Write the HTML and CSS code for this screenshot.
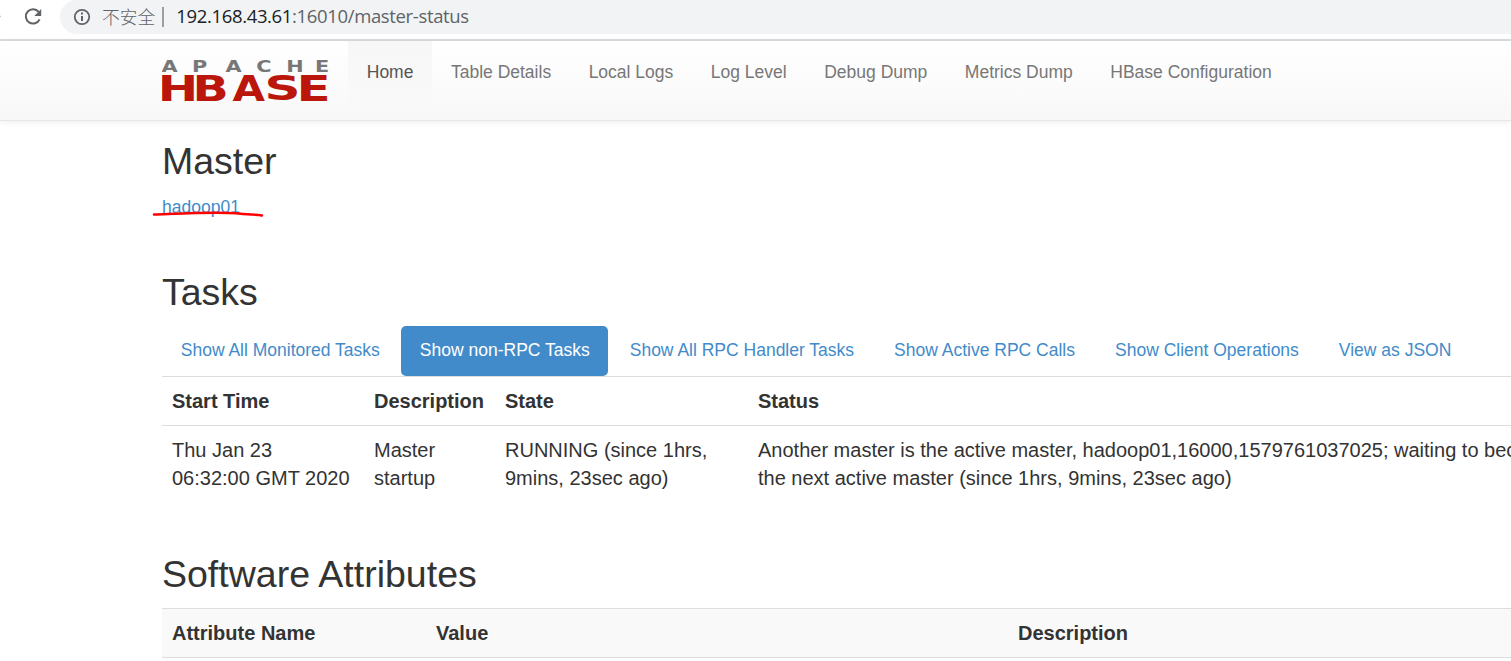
FILE: index.html
```html
<!DOCTYPE html>
<html lang="en">
<head>
<meta charset="utf-8">
<title>Master: hadoop01</title>
<link rel="stylesheet" href="styles.css">
</head>
<body>
<div class="browser-bar">
  <svg class="reload" width="60" height="34" viewBox="0 0 60 34">
    <circle cx="0" cy="16.500" r="1" fill="#c4c6c9"/>
    <path d="M38.700 11.900A7.200 7.200 0 1 0 39.600 19.300" fill="none" stroke="#5f6368" stroke-width="2"/>
    <path d="M41.200 9v6.900h-6.900z" fill="#5f6368"/>
  </svg>
  <div class="address">
    <svg class="info" width="18" height="18" viewBox="0 0 18 18">
      <circle cx="9" cy="9" r="7.200" fill="none" stroke="#5f6368" stroke-width="1.800"/>
      <path d="M9 4.500v2M9 8v5" stroke="#5f6368" stroke-width="2"/>
    </svg>
    <span class="insecure">不安全</span>
    <span class="divider"></span>
    <span class="url"><b>192.168.43.61</b>:16010/master-status</span>
  </div>
</div>
<header class="navbar">
  <a class="brand">
    <svg width="168" height="44" viewBox="0 0 168 44">
      <g class="apache" transform="translate(0 12.800) scale(1.300 1)">
        <text x="-0.300 23 48.800 72.600 95.500 117.700">APACHE</text>
      </g>
      <g class="hbase">
        <text transform="translate(-4.300 41.500) scale(1.380 1)">H</text>
        <text transform="translate(30.500 41.500) scale(1.360 1)">B</text>
        <text transform="translate(70.500 41.500) scale(1.200 1)">A</text>
        <text transform="translate(102.500 41.200) scale(1.430 .960)">S</text>
        <text transform="translate(134.500 41.500) scale(1.430 1)">E</text>
      </g>
    </svg>
  </a>
  <nav class="menu">
    <a class="active">Home</a><a>Table Details</a><a>Local Logs</a><a>Log Level</a><a>Debug Dump</a><a>Metrics Dump</a><a>HBase Configuration</a>
  </nav>
</header>
<main class="container">
  <section class="master">
    <h2>Master</h2>
    <a class="host">hadoop01
      <svg class="underline" width="114" height="8" viewBox="0 0 114 8"><path d="M2 4.500C25 3.700 66 1.500 84 3.300C96 5 104 4.200 110 5.500" fill="none" stroke="#f00" stroke-width="2.500" stroke-linecap="round"/></svg>
    </a>
  </section>
  <section class="tasks">
    <h2>Tasks</h2>
    <nav class="pills">
      <a>Show All Monitored Tasks</a><a class="active">Show non-RPC Tasks</a><a>Show All RPC Handler Tasks</a><a>Show Active RPC Calls</a><a>Show Client Operations</a><a>View as JSON</a>
    </nav>
    <table class="task-table">
      <colgroup><col class="start"><col class="desc"><col class="state"><col></colgroup>
      <tr><th>Start Time</th><th>Description</th><th>State</th><th>Status</th></tr>
      <tr><td>Thu Jan 23<br>06:32:00 GMT 2020</td><td>Master<br>startup</td><td>RUNNING (since 1hrs,<br>9mins, 23sec ago)</td><td>Another master is the active master, hadoop01,16000,1579761037025; waiting to become<br>the next active master (since 1hrs, 9mins, 23sec ago)</td></tr>
    </table>
  </section>
  <section class="software">
    <h2>Software Attributes</h2>
    <table class="attributes">
      <colgroup><col class="name"><col class="value"><col></colgroup>
      <tr><th>Attribute Name</th><th>Value</th><th>Description</th></tr>
      <tr><td></td><td></td><td></td></tr>
    </table>
  </section>
</main>
</body>
</html>
```
FILE: styles.css
```css
* { box-sizing: border-box; }
html { overflow: hidden; }
body {
  margin: 0;
  height: 661px;
  overflow: hidden;
  background: #fff;
  color: #333;
  font: 17.5px/25px "Liberation Sans", Arial, sans-serif;
}
.browser-bar {
  display: flex;
  height: 41px;
  border-bottom: 2px solid #dadce0;
}
.reload { flex: none; }
.address {
  display: flex;
  align-items: center;
  flex: 1;
  height: 34px;
  padding-left: 13px;
  border-radius: 17px 0 0 17px;
  background: #f1f3f4;
  color: #5f6368;
}
.info { flex: none; }
.insecure {
  margin-left: 11px;
  padding-bottom: 2px;
  font: 300 17.75px/32px "Noto Sans CJK SC", sans-serif;
}
.divider {
  width: 2px;
  height: 20px;
  margin: 0 12px 0 7px;
  background: #9b9fa3;
}
.url {
  padding-bottom: 2px;
  font: 18.5px/32px "Open Sans", sans-serif;
  letter-spacing: -0.35px;
  white-space: nowrap;
}
.url b { font-weight: 400; color: #202124; }
.navbar {
  display: flex;
  height: 80px;
  padding-left: 162px;
  border-bottom: 1px solid #e7e7e7;
  background: linear-gradient(#fff, #f8f8f8);
  box-shadow: 0 1px 6px rgba(0, 0, 0, .075);
}
.brand { padding-top: 18px; width: 186px; }
.brand svg { display: block; }
.apache { font: bold 16px "DejaVu Sans", sans-serif; fill: #777; }
.hbase { font: bold 35px "DejaVu Sans", sans-serif; fill: #ba160c; }
.menu { display: flex; }
.menu a {
  height: 63px;
  padding: 18.75px;
  color: #777;
  white-space: nowrap;
}
.menu .active {
  color: #555;
  background: linear-gradient(#f7f7f7, #f9f9f9);
}
.container { width: 1511px; padding-left: 162px; }
h2 { margin: 0; font-size: 37.5px; line-height: 41px; font-weight: 400; }
.master { padding-top: 20px; height: 151px; }
.host {
  position: relative;
  display: inline-block;
  margin-top: 13px;
  color: #428bca;
}
.underline { position: absolute; left: -10px; top: 15px; }
.tasks { height: 282px; }
.pills { display: flex; gap: 2.5px; margin-top: 13px; }
.pills a {
  height: 50px;
  padding: 11.5px 18.75px;
  border-radius: 5px;
  color: #428bca;
  white-space: nowrap;
}
.pills .active { background: #428bca; color: #fff; }
table {
  width: 1425px;
  border-collapse: collapse;
  table-layout: fixed;
  font-size: 20px;
  line-height: 28px;
}
th, td {
  padding: 10px;
  border-top: 1px solid #ddd;
  text-align: left;
  vertical-align: top;
  white-space: nowrap;
}
.start { width: 202px; }
.desc { width: 131px; }
.state { width: 253px; }
.attributes { margin-top: 13px; }
.attributes th { background: #f9f9f9; }
.name { width: 264px; }
.value { width: 582px; }
```
